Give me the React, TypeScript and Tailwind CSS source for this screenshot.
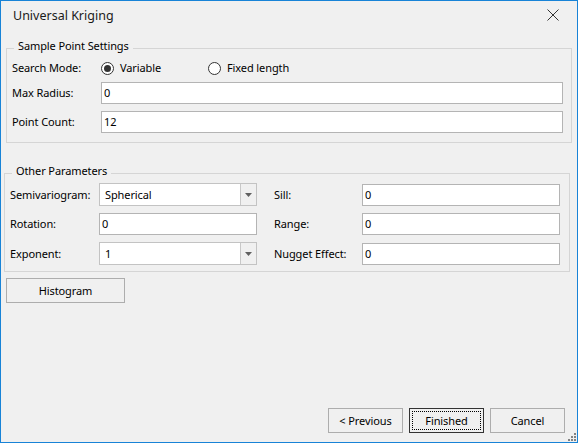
import React from "react";

function TextBox({ value, className = "" }: { value: string; className?: string }) {
  return (
    <div
      className={`h-[22px] bg-white border border-[#b4b4b4] flex items-center pl-[2px] text-black ${className}`}
    >
      {value}
    </div>
  );
}

function ComboBox({ value }: { value: string }) {
  return (
    <div className="w-[158px] h-[23px] bg-white border border-[#c3c3c3] flex items-stretch">
      <div className="flex-1 flex items-center pl-[5px]">{value}</div>
      {/* drop-down button */}
      <div className="w-[16px] border-l border-[#c8c8c8] bg-[#f0f0f0] flex items-center justify-center">
        <svg width="7" height="4" viewBox="0 0 7 4">
          <path d="M0 0H7L3.5 4Z" fill="#606060" />
        </svg>
      </div>
    </div>
  );
}

function Radio({ checked, label, className = "" }: { checked?: boolean; label: string; className?: string }) {
  return (
    <div className={`flex items-center ${className}`}>
      <div className="w-[13px] h-[13px] rounded-full border border-[#333] bg-white flex items-center justify-center">
        {checked && <div className="w-[7px] h-[7px] rounded-full bg-[#333]" />}
      </div>
      <span className="ml-[6px]">{label}</span>
    </div>
  );
}

function Button({ label, focused, className = "" }: { label: string; focused?: boolean; className?: string }) {
  return (
    <div
      className={`h-[25px] flex items-center justify-center bg-[#f0f0f0] border ${
        focused ? "border-[#333]" : "border-[#adadad]"
      } ${className}`}
    >
      {focused ? (
        <div className="w-[calc(100%-4px)] h-[calc(100%-4px)] border border-dotted border-black flex items-center justify-center">
          {label}
        </div>
      ) : (
        label
      )}
    </div>
  );
}

export default function App() {
  return (
    <div className="w-[578px] h-[443px] bg-[#f0f0f0] border border-[#1883d7] flex flex-col relative font-['Noto_Sans',sans-serif] text-[11px] tracking-[-0.1px] leading-[16px] text-black">
      {/* title bar */}
      <div className="h-[37px] flex items-start justify-between pl-[12px] pr-[18px]">
        <span className="mt-[5px] text-[12.5px] tracking-normal leading-[20px] text-[#1a1a1a]">Universal Kriging</span>
        <svg className="mt-[8px]" width="12" height="12" viewBox="0 0 12 12">
          <path d="M0.5 0.5L11.5 11.5M11.5 0.5L0.5 11.5" stroke="#333" strokeWidth="1" />
        </svg>
      </div>

      {/* sample point settings */}
      <fieldset className="ml-[5px] mr-[5px] border border-[#d5d5d5] pl-[5px] pr-[8px] pb-[9px]">
        <legend className="ml-[2px] px-[4px] pb-[4px] leading-[16px]">Sample Point Settings</legend>
        <div className="h-[20px] flex items-center">
          <span className="w-[89px]">Search Mode:</span>
          <Radio checked label="Variable" className="w-[107px]" />
          <Radio label="Fixed length" />
        </div>
        <div className="mt-[4px] flex items-center">
          <span className="w-[89px]">Max Radius:</span>
          <TextBox value="0" className="flex-1" />
        </div>
        <div className="mt-[7px] flex items-center">
          <span className="w-[89px]">Point Count:</span>
          <TextBox value="12" className="flex-1" />
        </div>
      </fieldset>

      {/* other parameters */}
      <fieldset className="mt-[20px] ml-[3px] mr-[7px] border border-[#d5d5d5] pl-[5px] pr-[9px] pb-[6px] flex flex-col gap-[7px]">
        <legend className="ml-[2px] px-[4px] pb-[4px] leading-[16px]">Other Parameters</legend>
        <div className="flex items-center">
          <span className="w-[89px]">Semivariogram:</span>
          <ComboBox value="Spherical" />
          <span className="ml-[17px] w-[88px]">Sill:</span>
          <TextBox value="0" className="flex-1" />
        </div>
        <div className="flex items-center">
          <span className="w-[89px]">Rotation:</span>
          <TextBox value="0" className="w-[158px]" />
          <span className="ml-[17px] w-[88px]">Range:</span>
          <TextBox value="0" className="flex-1" />
        </div>
        <div className="flex items-center">
          <span className="w-[89px]">Exponent:</span>
          <ComboBox value="1" />
          <span className="ml-[17px] w-[88px]">Nugget Effect:</span>
          <TextBox value="0" className="flex-1" />
        </div>
      </fieldset>

      <div className="mt-[6px] ml-[5px]">
        <Button label="Histogram" className="w-[119px]" />
      </div>

      {/* footer buttons */}
      <div className="mt-auto mb-[9px] mr-[12px] flex justify-end gap-[6px]">
        <Button label="< Previous" className="w-[75px]" />
        <Button label="Finished" focused className="w-[75px]" />
        <Button label="Cancel" className="w-[75px]" />
      </div>

      {/* size grip */}
      <svg className="absolute right-0 bottom-0" width="9" height="9" viewBox="0 0 9 9">
        <rect x="6" y="0" width="2" height="2" fill="#828282" />
        <rect x="3" y="3" width="2" height="2" fill="#828282" />
        <rect x="6" y="3" width="2" height="2" fill="#828282" />
        <rect x="0" y="6" width="2" height="2" fill="#828282" />
        <rect x="3" y="6" width="2" height="2" fill="#828282" />
        <rect x="6" y="6" width="2" height="2" fill="#828282" />
      </svg>
    </div>
  );
}
